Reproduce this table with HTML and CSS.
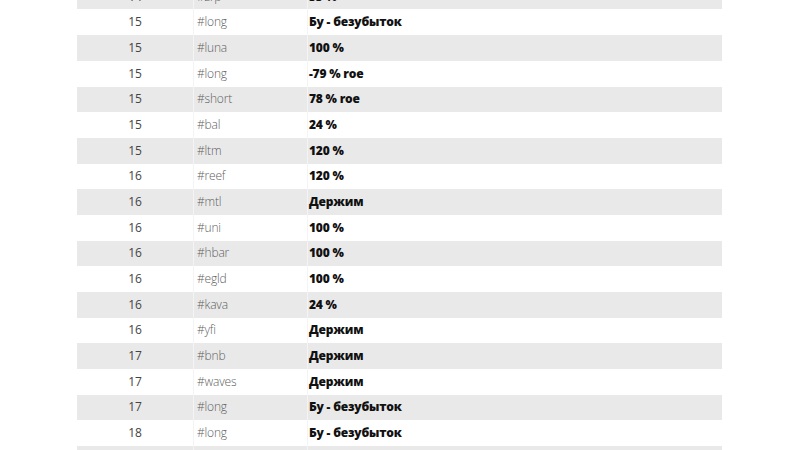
FILE: index.html
```html
<!DOCTYPE html>
<html lang="ru">
<head>
<meta charset="utf-8">
<link rel="stylesheet" href="styles.css">
</head>
<body>
<div class="page">
<table class="signals">
<tbody>
<tr class="odd"><td class="day">14</td><td class="tag">#zrp</td><td class="res">33 %</td></tr>
<tr><td class="day">15</td><td class="tag">#long</td><td class="res">Бу - безубыток</td></tr>
<tr class="odd"><td class="day">15</td><td class="tag">#luna</td><td class="res">100 %</td></tr>
<tr><td class="day">15</td><td class="tag">#long</td><td class="res">-79 % roe</td></tr>
<tr class="odd"><td class="day">15</td><td class="tag">#short</td><td class="res">78 % roe</td></tr>
<tr><td class="day">15</td><td class="tag">#bal</td><td class="res">24 %</td></tr>
<tr class="odd"><td class="day">15</td><td class="tag">#ltm</td><td class="res">120 %</td></tr>
<tr><td class="day">16</td><td class="tag">#reef</td><td class="res">120 %</td></tr>
<tr class="odd"><td class="day">16</td><td class="tag">#mtl</td><td class="res">Держим</td></tr>
<tr><td class="day">16</td><td class="tag">#uni</td><td class="res">100 %</td></tr>
<tr class="odd"><td class="day">16</td><td class="tag">#hbar</td><td class="res">100 %</td></tr>
<tr><td class="day">16</td><td class="tag">#egld</td><td class="res">100 %</td></tr>
<tr class="odd"><td class="day">16</td><td class="tag">#kava</td><td class="res">24 %</td></tr>
<tr><td class="day">16</td><td class="tag">#yfi</td><td class="res">Держим</td></tr>
<tr class="odd"><td class="day">17</td><td class="tag">#bnb</td><td class="res">Держим</td></tr>
<tr><td class="day">17</td><td class="tag">#waves</td><td class="res">Держим</td></tr>
<tr class="odd"><td class="day">17</td><td class="tag">#long</td><td class="res">Бу - безубыток</td></tr>
<tr><td class="day">18</td><td class="tag">#long</td><td class="res">Бу - безубыток</td></tr>
<tr class="odd"><td class="day">18</td><td class="tag">#short</td><td class="res">Держим</td></tr>
</tbody>
</table>
</div>
</body>
</html>
```
FILE: styles.css
```css
html, body {
  margin: 0;
  padding: 0;
  background: #ffffff;
}
.page {
  width: 800px;
  height: 450px;
  overflow: hidden;
  padding-left: 77px;
  box-sizing: border-box;
}
.signals {
  margin-top: -16.2px;
  width: 645px;
  border-collapse: collapse;
  font-family: "Open Sans", "Noto Sans", sans-serif;
  font-size: 12px;
  letter-spacing: -0.2px;
}
.signals tr {
  height: 25.68px;
}
.signals tr.odd {
  background: #e9e9e9;
}
.signals td {
  padding: 0;
  vertical-align: middle;
  line-height: 14px;
}
.day {
  width: 116px;
  text-align: center;
  color: #444444;
}
.tag {
  width: 110px;
  padding-left: 3px !important;
  color: #5e5e5e;
  font-weight: 300;
  border-left: 1px solid #f4f4f4;
}
.res {
  padding-left: 1px !important;
  color: #111111;
  font-weight: 800;
  border-left: 1px solid #f4f4f4;
}
```
